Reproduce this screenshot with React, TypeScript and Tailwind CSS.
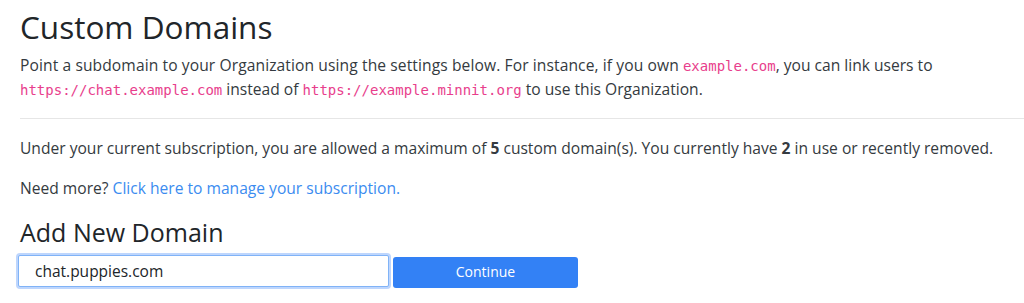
export default function App() {
  const code = "font-['DejaVu_Sans_Mono',monospace] text-[14px] text-[#e83e8c]";

  return (
    <div className="min-h-[303px] bg-white pl-5 pt-[6px] font-['Open_Sans','Noto_Sans',sans-serif] text-[15.6px] leading-[22.5px] text-[#343a40]">
      <h1 className="mb-[6px] text-[31.5px] leading-[42px] font-normal text-[#212529]">Custom Domains</h1>
      <p>
        <span className="tracking-[0.1px]">
          Point a subdomain to your Organization using the settings below. For instance, if you own
        </span>{" "}
        <code className={code}>example.com</code>, you can link users to
        <br />
        <code className={code}>https://chat.example.com</code> instead of{" "}
        <code className={code}>https://example.minnit.org</code> to use this Organization.
      </p>

      <hr className="mt-[16.5px] mb-[18.5px] border-t border-[#e6e6e6]" />

      <p className="mb-[17.5px]">
        Under your current subscription, you are allowed a maximum of <b>5</b> custom domain(s). You
        currently have <b>2</b> in use or recently removed.
      </p>
      <p className="mb-[17.5px]">
        Need more?{" "}
        <a href="#" className="text-[#3b8cf0]">
          Click here to manage your subscription.
        </a>
      </p>

      <h2 className="text-[25px] leading-[30px] font-normal text-[#212529]">Add New Domain</h2>
      <div className="mt-[7.5px] flex items-start gap-[4px]">
        <input
          defaultValue="chat.puppies.com"
          className="ml-[-2px] h-[32px] w-[371px] rounded-[2px] border border-[#80b3f7] bg-white px-[16px] text-[15.5px] text-[#212529] shadow-[0_0_0_2px_rgba(110,165,250,0.45)] outline-none"
        />
        <button className="mt-[2px] h-[31px] w-[185px] rounded-[3px] bg-[#3381f5] text-[14px] text-white">
          Continue
        </button>
      </div>
    </div>
  );
}
